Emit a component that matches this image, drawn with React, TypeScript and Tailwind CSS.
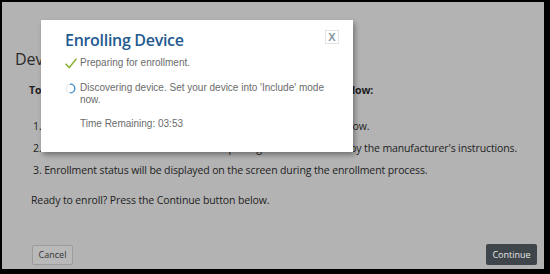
import React from 'react';

const Check = () => (
  <svg width="12" height="11" viewBox="0 0 12 11" className="shrink-0">
    <path d="M1 6.2 L4.3 9.6 L11 1.2" fill="none" stroke="#8db43c" strokeWidth="1.6" strokeLinecap="round" strokeLinejoin="round" />
  </svg>
);

const Spinner = () => (
  <svg width="11" height="11" viewBox="0 0 11 11" className="shrink-0">
    <circle cx="5.5" cy="5.5" r="4.3" fill="none" stroke="#e4ebf2" strokeWidth="1.3" />
    <path d="M5.5 1.2 A4.3 4.3 0 0 1 5.5 9.8" fill="none" stroke="#3f8fd0" strokeWidth="1.3" strokeLinecap="round" />
  </svg>
);

const EnrollModal = () => (
  <div className="absolute left-[39px] top-[18px] w-[312px] h-[132px] bg-white shadow-[2px_3px_5px_rgba(0,0,0,0.35)] pl-[24px] pt-[8px] font-['Liberation_Sans',Arial,sans-serif] text-[10px] text-[#6b6b6b]">
    <button className="absolute left-[284px] top-[10px] w-[14px] h-[14px] border border-[#e3e3e3] flex items-center justify-center text-[11px] font-bold text-[#8a98a6] leading-none">
      X
    </button>
    <h2 className="font-['Open_Sans',sans-serif] font-semibold text-[16px] tracking-[-0.3px] leading-[24px] text-[#1f5a8f]">
      Enrolling Device
    </h2>
    <div className="mt-[4px] flex items-center gap-[3px] leading-[14px]">
      <Check />
      <span>Preparing for enrollment.</span>
    </div>
    <div className="mt-[12px] flex items-start gap-[4px] leading-[12px]">
      <div className="pt-[1px]">
        <Spinner />
      </div>
      <span className="w-[250px]">Discovering device. Set your device into 'Include' mode now.</span>
    </div>
    <div className="mt-[12px] pl-[15px] leading-[12px]">Time Remaining: 03:53</div>
  </div>
);

export default function App() {
  return (
    <div className="w-[550px] h-[274px] bg-black pt-[2px] pl-[2px] pr-[6px] pb-[5px]">
      <div className="relative w-full h-full bg-[#b3b3b3] flex flex-col font-['Open_Sans',sans-serif] text-[#1e1e1e]">
        <h1 className="pt-[46px] pl-[13px] text-[16px] leading-[22px] text-[#2a2a2a]">Device Enrollment</h1>
        <p className="mt-[12px] pl-[27px] text-[10.5px] tracking-[-0.12px] font-bold leading-[16px]">
          To enroll a device into your network, please follow the steps below:
        </p>
        <ol className="mt-[17px] pl-[31px] text-[10.5px] tracking-[-0.12px] leading-[22px]">
          <li>1. Make sure the device is powered on and placed near the hub below.</li>
          <li>2. Put the device in its 'Include' or 'Learn' pairing mode as directed by the manufacturer's instructions.</li>
          <li>3. Enrollment status will be displayed on the screen during the enrollment process.</li>
        </ol>
        <p className="mt-[8px] pl-[29px] text-[10.5px] tracking-[-0.12px] leading-[22px]">Ready to enroll? Press the Continue button below.</p>
        <div className="mt-auto mb-[4px] pl-[30px] pr-[7px] flex justify-between items-end">
          <button className="w-[41px] h-[20px] border border-[#9c9c9c] rounded-[2px] bg-[#b9b9b9] text-[9px] text-[#333]">
            Cancel
          </button>
          <button className="w-[51px] h-[21px] rounded-[2px] bg-[#3e464c] text-[9px] text-[#e6e6e6]">
            Continue
          </button>
        </div>
        <EnrollModal />
      </div>
    </div>
  );
}
